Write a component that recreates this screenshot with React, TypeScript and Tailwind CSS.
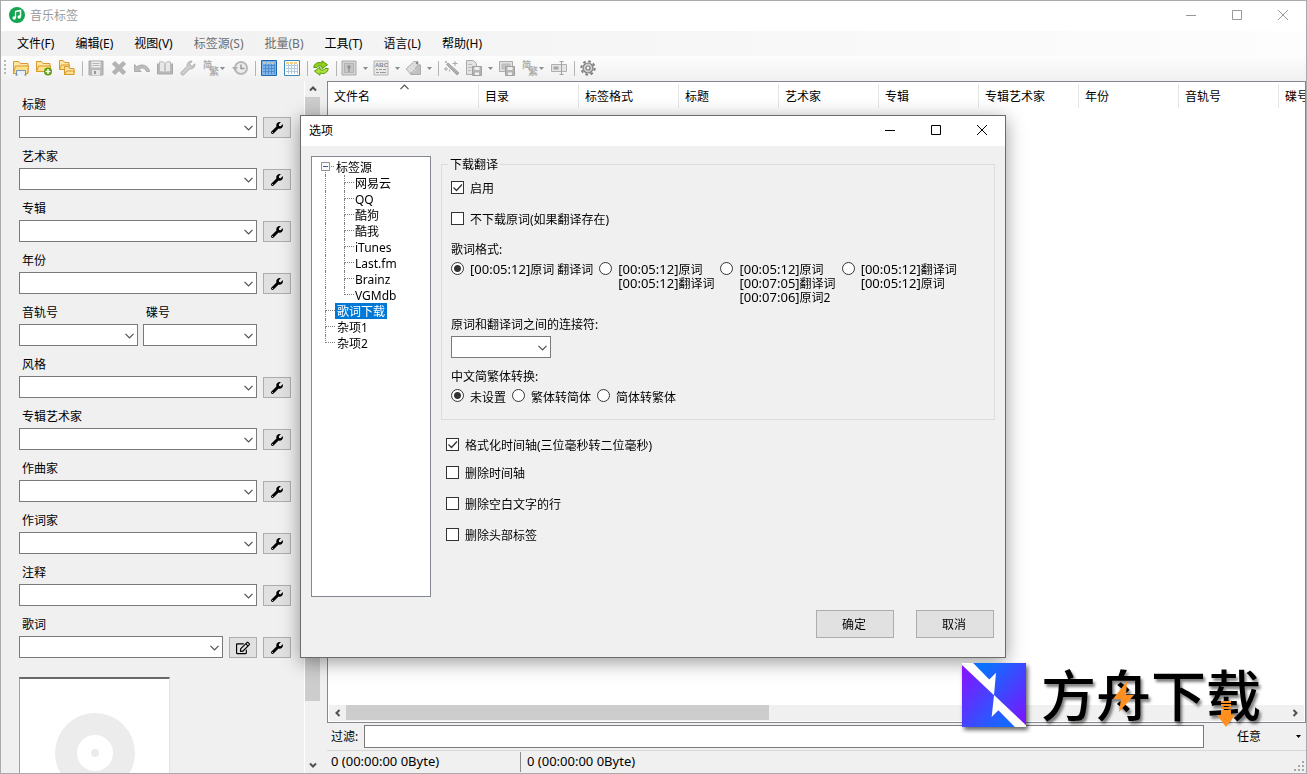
import type { ReactNode } from 'react'
import clsx from 'clsx'
import { FaRegEdit, FaWrench } from 'react-icons/fa'

const menus = [
  { name: '文件(F)' },
  { name: '编辑(E)' },
  { name: '视图(V)' },
  { name: '标签源(S)', disabled: true },
  { name: '批量(B)', disabled: true },
  { name: '工具(T)' },
  { name: '语言(L)' },
  { name: '帮助(H)' },
]

const columns = [
  '目录',
  '标签格式',
  '标题',
  '艺术家',
  '专辑',
  '专辑艺术家',
  '年份',
  '音轨号',
  '碟号',
]

const sources = ['网易云', 'QQ', '酷狗', '酷我', 'iTunes', 'Last.fm', 'Brainz', 'VGMdb']

function Svg({ children }: { children: ReactNode }) {
  return (
    <svg className="w-4 h-4 shrink-0" viewBox="0 0 16 16" fill="none" aria-hidden="true">
      {children}
    </svg>
  )
}

function Chevron({ className }: { className?: string }) {
  return (
    <svg
      className={clsx('w-[9px] h-[6px]', className)}
      viewBox="0 0 9 6"
      fill="none"
      stroke="currentColor"
      strokeWidth="1.2"
      aria-hidden="true"
    >
      <path d="M0.5 0.9l4 4 4-4" />
    </svg>
  )
}

function ScrollArrow({ className }: { className?: string }) {
  return (
    <svg
      className={clsx('w-2 h-2 text-[#505050]', className)}
      viewBox="0 0 8 8"
      fill="none"
      stroke="currentColor"
      strokeWidth="2"
      aria-hidden="true"
    >
      <path d="M1 2.5l3 3 3-3" />
    </svg>
  )
}

/* Toolbar icons */

function FolderShape({ x, y, w, h }: { x: number; y: number; w: number; h: number }) {
  return (
    <g transform={`translate(${x} ${y})`}>
      <path d={`M.5 ${h - 0.5}V.5h${w / 3}l1.5 2h${w - w / 3 - 3}V${h - 0.5}z`} fill="#fde6a3" stroke="#d9992f" />
      <path d={`M.5 ${h - 0.5}L2.5 5h${w - 3}l-1 ${h - 5.5}z`} fill="#ffe08a" stroke="#d9992f" />
    </g>
  )
}

function OpenFolderIcon() {
  return (
    <Svg>
      <FolderShape x={0} y={1} w={16} h={13} />
      <path d="M3.5 15v-4.5h9V15" fill="#e8f1fb" stroke="#7a93b5" />
      <path d="M2.5 15h2M11.5 15h2" stroke="#5f7796" />
    </Svg>
  )
}

function AddFolderIcon() {
  return (
    <Svg>
      <FolderShape x={0} y={1} w={15} h={11} />
      <circle cx="12" cy="11.5" r="4" fill="#5d9e0c" />
      <path d="M12 9v5M9.5 11.5h5" stroke="#fff" strokeWidth="1.5" />
    </Svg>
  )
}

function FoldersIcon() {
  return (
    <Svg>
      <FolderShape x={0} y={0} w={11} h={10} />
      <FolderShape x={5} y={6} w={11} h={9} />
    </Svg>
  )
}

function SaveIcon() {
  return (
    <Svg>
      <path d="M1 1h14v14H1z" fill="#b9b9b9" stroke="#a8a8a8" />
      <path d="M3.5 1.5h9v6h-9z" fill="#eee" />
      <path d="M4.5 3.5h7M4.5 5.5h7" stroke="#b5b5b5" />
      <path d="M4 10h8v5H4z" fill="#e4e4e4" />
      <path d="M6 11h2v3H6z" fill="#999" />
    </Svg>
  )
}

function DeleteIcon() {
  return (
    <Svg>
      <path
        d="M4 1.5l4 4 4-4 2.5 2.5-4 4 4 4-2.5 2.5-4-4-4 4L1.5 12l4-4-4-4z"
        fill="#b4b4b4"
        stroke="#a8a8a8"
      />
    </Svg>
  )
}

function UndoIcon() {
  return (
    <Svg>
      <path d="M.5 4.5v7H7L5 9.300c3-2.300 6-1.600 7.500 2.200h3C14.5 5.500 8 3 2.800 6.800z" fill="#bdbdbd" stroke="#ababab" />
    </Svg>
  )
}

function BookIcon() {
  return (
    <Svg>
      <path d="M.5 3.5V14h15V3.500" fill="#b8b8b8" stroke="#a8a8a8" />
      <path d="M2.5 2C5 1.200 7 2 8 3.500V13c-1-1.200-3-1.500-5.500-1zM13.500 2C11 1.200 9 2 8 3.500V13c1-1.200 3-1.500 5.500-1z" fill="#e8e8e8" stroke="#b8b8b8" />
    </Svg>
  )
}

function WrenchIcon() {
  return (
    <Svg>
      <path
        d="M1.300 12.200l6-6C6.500 3.500 9 .8 12 1.300L9.800 3.700l.5 2 2 .5 2.400-2.300c.5 3.100-2.200 5.500-4.900 4.800l-6 6c-1.600 1.200-3.700-.9-2.500-2.500z"
        fill="#cfcfcf"
        stroke="#a8a8a8"
      />
    </Svg>
  )
}

function ConvertIcon() {
  return (
    <svg
      className="w-4 h-4 shrink-0 overflow-visible font-['Noto_Sans_CJK_SC',sans-serif] font-bold"
      viewBox="0 0 16 16"
      fill="#adadad"
      aria-hidden="true"
    >
      <text x="0" y="8" fontSize="9">简</text>
      <text x="6" y="15" fontSize="10">繁</text>
    </svg>
  )
}

function HistoryIcon() {
  return (
    <Svg>
      <circle cx="9" cy="8" r="6" fill="#ececec" stroke="#b8b8b8" strokeWidth="2" />
      <path d="M9 4.500V8.500h3.500" stroke="#999" strokeWidth="1.5" />
      <path d="M0 7h6l-3 4z" fill="#b0b0b0" />
    </Svg>
  )
}

function GridIcon({ active }: { active?: boolean }) {
  return (
    <Svg>
      <path d="M.5.5h15v15H.5z" fill={active ? '#7fb4ea' : '#fff'} stroke={active ? '#1f66b0' : '#3d87b8'} />
      <path d="M2 3h12" stroke={active ? '#dfc98f' : '#efc45c'} strokeWidth="1.5" strokeDasharray="3 1" />
      <path
        d="M2 5.500h12M2 8.500h12M2 11.500h12M4.500 4v10M7.500 4v10M10.500 4v10M13.500 4v10"
        stroke={active ? '#4f8ccb' : '#b3cbe0'}
      />
    </Svg>
  )
}

function RefreshIcon() {
  return (
    <Svg>
      <path d="M.8 7.500C1 3.500 5 1.500 9 3V.8l5.500 4L9 8.800V6.500C6.500 5.300 4.500 6 4 7.500z" fill="#93cf1f" stroke="#5a9a0c" />
      <path d="M15.200 8.500c-.2 4-4.200 6-8.200 4.500v2.200l-5.500-4L7 7.200v2.300c2.500 1.200 4.500.5 5-1z" fill="#aee03b" stroke="#5a9a0c" />
    </Svg>
  )
}

function PictureIcon() {
  return (
    <Svg>
      <path d="M1 1h14v14H1z" fill="#d4d4d4" stroke="#ababab" />
      <path d="M3.500 3.500h9v9h-9z" fill="#c6c6c6" stroke="#b3b3b3" />
      <path d="M8 5a2 2 0 0 1 .7 3.800V12H7.300V8.800A2 2 0 0 1 8 5z" fill="#949494" />
    </Svg>
  )
}

function AbcIcon() {
  return (
    <svg
      className="w-4 h-4 shrink-0 font-['Liberation_Sans',sans-serif] font-bold"
      viewBox="0 0 16 16"
      fill="none"
      aria-hidden="true"
    >
      <path d="M1 1h14v14H1z" fill="#e9e9e9" stroke="#b3b3b3" />
      <text x="2" y="7" fontSize="6" fill="#8a8a8a">ABC</text>
      <path d="M3 9.500h2m1 0h3m1 0h3M3 12.500h3m1 0h6" stroke="#999" />
    </svg>
  )
}

function TagIcon() {
  return (
    <Svg>
      <path d="M1 9l8-7.500h4V6l-7 8.500z" fill="#dcdcdc" stroke="#b3b3b3" />
      <path d="M5 14l9-9.500 1.500.5v9.500H7z" fill="#c0c0c0" stroke="#ababab" />
      <circle cx="12" cy="3" r="1.200" fill="#888" />
      <path d="M4.500 8.500l4 3.500M6.500 7l4 3.500" stroke="#e8e8e8" />
    </Svg>
  )
}

function WandIcon() {
  return (
    <Svg>
      <path d="M4 3l11 10-2 2L2.500 4.500z" fill="#b0b0b0" stroke="#a0a0a0" />
      <path d="M2 7v4M0 9h4M11 1v5M8.500 3.500h5M2 1v2M1 2h2M5.500 9.500v2" stroke="#a8a8a8" />
    </Svg>
  )
}

function DocSaveIcon({ wide }: { wide?: boolean }) {
  return (
    <Svg>
      <path d={wide ? 'M.5 1.5h13v10H.5z' : 'M.5.5h7l3 3v11H.5z'} fill="#e2e2e2" stroke="#ababab" />
      <path d={wide ? 'M3 4h8v5H3z' : 'M2 4.500h4M2 7.500h4M2 10.500h3'} fill="#c4c4c4" stroke="#bbb" />
      <path d="M6.500 6.500h9v9h-9z" fill="#b4b4b4" stroke="#a0a0a0" />
      <path d="M8.500 7h5v3h-5zM9 12.500h4V15H9z" fill="#efefef" />
    </Svg>
  )
}

function RenameIcon() {
  return (
    <Svg>
      <path d="M.5 4.500h15v7H.5z" fill="#e4e4e4" stroke="#b0b0b0" />
      <path d="M2.500 6.500h5v3h-5z" fill="#a5a5a5" />
      <path d="M10.500 2v12M8.500 1.500h4M8.500 14.500h4" stroke="#a0a0a0" />
    </Svg>
  )
}

function GearIcon() {
  return (
    <Svg>
      <circle cx="8" cy="8" r="6.700" stroke="#7d7d7d" strokeWidth="2" strokeDasharray="2.630 2.630" />
      <circle cx="8" cy="8" r="5" fill="#d0d0d0" stroke="#7d7d7d" strokeWidth="1.200" />
      <circle cx="8" cy="8" r="2" fill="#f8f8f8" stroke="#7d7d7d" strokeWidth="1.200" />
    </Svg>
  )
}

function Caret() {
  return (
    <svg className="w-[5px] h-[3px] shrink-0" viewBox="0 0 5 3" fill="#8c8c8c" aria-hidden="true">
      <path d="M0 0h5L2.500 3z" />
    </svg>
  )
}

function ToolButton({ label, children }: { label: string; children: ReactNode }) {
  return (
    <button type="button" aria-label={label} className="flex items-center w-[23px] h-6 pl-[3px]">
      {children}
    </button>
  )
}

function SplitButton({ label, children }: { label: string; children: ReactNode }) {
  return (
    <button type="button" aria-label={label} className="flex items-center gap-[6px] w-8 h-6 pl-0.5">
      {children}
      <Caret />
    </button>
  )
}

function MenuButton({ label, children }: { label: string; children: ReactNode }) {
  return (
    <button type="button" aria-label={label} className="flex items-center gap-px w-[29px] h-6 pl-[3px]">
      {children}
      <Caret />
    </button>
  )
}

function Separator() {
  return (
    <span className="flex items-center justify-center w-[6px] h-6">
      <span className="w-px h-[15px] bg-[#b4b4b4]" />
    </span>
  )
}

function Toolbar() {
  return (
    <div className="flex items-start h-[25px] shrink-0 bg-linear-to-b from-[#fdfdfd] to-[#f0f0f0]">
      <svg className="w-[9px] h-6 shrink-0" viewBox="0 0 9 24" fill="#b8b8b8" aria-hidden="true">
        <path d="M3 4h2v2H3zM3 8h2v2H3zM3 12h2v2H3zM3 16h2v2H3z" />
      </svg>
      <ToolButton label="打开文件夹"><OpenFolderIcon /></ToolButton>
      <ToolButton label="添加文件夹"><AddFolderIcon /></ToolButton>
      <ToolButton label="最近文件夹"><FoldersIcon /></ToolButton>
      <Separator />
      <ToolButton label="保存"><SaveIcon /></ToolButton>
      <ToolButton label="删除"><DeleteIcon /></ToolButton>
      <ToolButton label="撤销"><UndoIcon /></ToolButton>
      <ToolButton label="读取"><BookIcon /></ToolButton>
      <ToolButton label="修复"><WrenchIcon /></ToolButton>
      <MenuButton label="简繁转换"><ConvertIcon /></MenuButton>
      <ToolButton label="历史"><HistoryIcon /></ToolButton>
      <Separator />
      <ToolButton label="列表"><GridIcon active /></ToolButton>
      <ToolButton label="表格"><GridIcon /></ToolButton>
      <Separator />
      <ToolButton label="刷新"><RefreshIcon /></ToolButton>
      <Separator />
      <SplitButton label="封面"><PictureIcon /></SplitButton>
      <SplitButton label="歌词"><AbcIcon /></SplitButton>
      <SplitButton label="标签"><TagIcon /></SplitButton>
      <Separator />
      <ToolButton label="自动匹配"><WandIcon /></ToolButton>
      <SplitButton label="导出"><DocSaveIcon /></SplitButton>
      <ToolButton label="导出封面"><DocSaveIcon wide /></ToolButton>
      <MenuButton label="批量简繁转换"><ConvertIcon /></MenuButton>
      <ToolButton label="重命名"><RenameIcon /></ToolButton>
      <Separator />
      <ToolButton label="设置"><GearIcon /></ToolButton>
    </div>
  )
}

function WindowButtons() {
  return (
    <div className="flex ml-auto">
      <button type="button" aria-label="最小化" className="flex items-center justify-center w-[46px] h-[29px]">
        <svg className="w-[10px] h-[11px]" viewBox="0 0 10 11" stroke="currentColor" fill="none">
          <path d="M0 5.500h10" />
        </svg>
      </button>
      <button type="button" aria-label="最大化" className="flex items-center justify-center w-[46px] h-[29px]">
        <svg className="w-[10px] h-[11px]" viewBox="0 0 10 11" stroke="currentColor" fill="none">
          <path d="M.5.5h9v9h-9z" />
        </svg>
      </button>
      <button type="button" aria-label="关闭" className="flex items-center justify-center w-[46px] h-[29px]">
        <svg className="w-[10px] h-[11px]" viewBox="0 0 10 11" stroke="currentColor" fill="none">
          <path d="M0 0l10 10M10 0L0 10" />
        </svg>
      </button>
    </div>
  )
}

function Combo({ id, className }: { id: string; className?: string }) {
  return (
    <span className={clsx('grid items-center', className)}>
      <select
        id={id}
        className="w-full h-[22px] col-start-1 row-start-1 bg-white border border-[#7a7a7a] appearance-none outline-none"
      />
      <Chevron className="col-start-1 row-start-1 justify-self-end mr-1 mt-0.5 pointer-events-none text-[#505050]" />
    </span>
  )
}

function IconButton({ label, children }: { label: string; children: ReactNode }) {
  return (
    <button
      type="button"
      aria-label={label}
      className="flex items-center justify-center w-7 h-[21px] shrink-0 self-end bg-[#e1e1e1] border border-[#adadad] text-black"
    >
      {children}
    </button>
  )
}

function Field({ id, label, editable }: { id: string; label: string; editable?: boolean }) {
  return (
    <div className="flex flex-col gap-[3px]">
      <label htmlFor={id} className="pl-[3px] leading-4">
        {label}
      </label>
      <div className="flex gap-[6px]">
        <Combo id={id} className="flex-1" />
        {editable && (
          <IconButton label={`编辑${label}`}>
            <FaRegEdit className="w-[14px] h-[14px]" />
          </IconButton>
        )}
        <IconButton label={`${label}工具`}>
          <FaWrench className="w-3 h-3" />
        </IconButton>
      </div>
    </div>
  )
}

function Sidebar() {
  return (
    <aside className="flex w-[319px] shrink-0 overflow-hidden">
      <div className="flex-1 pl-[18px] pr-[13px] pt-4">
        <div className="flex flex-col gap-[11px]">
          <Field id="title" label="标题" />
          <Field id="artist" label="艺术家" />
          <Field id="album" label="专辑" />
          <Field id="year" label="年份" />
          <div className="flex gap-[5px] pr-[34px]">
            <div className="flex flex-col w-[119px] gap-[3px]">
              <label htmlFor="track" className="pl-[3px] leading-4">音轨号</label>
              <Combo id="track" />
            </div>
            <div className="flex flex-col flex-1 gap-[3px]">
              <label htmlFor="disc" className="pl-[3px] leading-4">碟号</label>
              <Combo id="disc" />
            </div>
          </div>
          <Field id="genre" label="风格" />
          <Field id="album-artist" label="专辑艺术家" />
          <Field id="composer" label="作曲家" />
          <Field id="lyricist" label="作词家" />
          <Field id="comment" label="注释" />
          <Field id="lyrics" label="歌词" editable />
        </div>
        <div className="flex items-center justify-center w-[151px] h-[151px] mt-[19px] bg-white border border-t-2 border-[#a0a0a0] border-t-[#696969] border-r-[#e3e3e3]">
          <svg className="w-20 h-20" viewBox="0 0 80 80" aria-hidden="true">
            <circle cx="40" cy="40" r="40" fill="#ececec" />
            <circle cx="40" cy="40" r="18" fill="#fff" />
            <circle cx="40" cy="40" r="4" fill="#ececec" />
          </svg>
        </div>
      </div>
      <div className="flex flex-col items-center w-4 border-l border-white">
        <div className="flex items-center h-4 shrink-0">
          <ScrollArrow className="rotate-180" />
        </div>
        <div className="flex-1 w-full">
          <div className="w-full h-11/12 bg-[#cdcdcd]" />
        </div>
        <div className="flex items-center h-[17px] shrink-0">
          <ScrollArrow />
        </div>
      </div>
    </aside>
  )
}

function FileList() {
  return (
    <div className="flex flex-col flex-1 min-h-0 overflow-hidden bg-white border border-[#828790]">
      <div className="flex-1 overflow-hidden">
        <table className="w-[1051px] table-fixed">
          <thead>
            <tr className="h-[26px]">
              <th className="w-[151px] p-0 font-normal text-left">
                <div className="grid items-center h-6 mt-px pl-[6px] border-r border-[#e5e5e5]">
                  <span className="col-start-1 row-start-1 pt-0.5">文件名</span>
                  <Chevron className="col-start-1 row-start-1 self-start justify-self-center mr-1 rotate-180 text-[#505050]" />
                </div>
              </th>
              {columns.map((name) => (
                <th key={name} className="p-0 font-normal text-left">
                  <div className="flex items-center h-6 mt-px pt-0.5 pl-[6px] border-r border-[#e5e5e5]">{name}</div>
                </th>
              ))}
            </tr>
          </thead>
          <tbody />
        </table>
      </div>
      <div className="flex items-center h-4 mb-px mx-px bg-[#f0f0f0]">
        <div className="flex justify-center w-[17px] shrink-0">
          <ScrollArrow className="rotate-90" />
        </div>
        <div className="flex-1 h-full">
          <div className="w-[45%] h-[15px] bg-[#cdcdcd]" />
        </div>
        <div className="flex justify-center w-[19px] shrink-0">
          <ScrollArrow className="-rotate-90" />
        </div>
      </div>
    </div>
  )
}

function FilterBar() {
  return (
    <div className="flex items-center h-7 border-b border-[#d7d7d7] shrink-0">
      <label htmlFor="filter" className="w-[37px] pl-1 shrink-0">
        过滤:
      </label>
      <input
        id="filter"
        type="text"
        className="flex-1 min-w-0 h-[23px] px-1 bg-white border border-[#7a7a7a] outline-none"
      />
      <div className="grid items-center w-[102px]">
        <select
          aria-label="过滤字段"
          className="w-full h-6 pt-px pl-[33px] col-start-1 row-start-1 appearance-none outline-none"
        >
          <option>任意</option>
        </select>
        <svg
          className="w-[5px] h-[3px] mr-[5px] col-start-1 row-start-1 justify-self-end pointer-events-none"
          viewBox="0 0 5 3"
          aria-hidden="true"
        >
          <path d="M0 0h5L2.500 3z" />
        </svg>
      </div>
    </div>
  )
}

function StatusBar() {
  return (
    <div className="flex items-center h-[22px] shrink-0 text-[13px]">
      <span className="flex items-center w-[194px] h-5 pl-1 border-r border-[#8c8c8c]">0 (00:00:00 0Byte)</span>
      <span className="pl-[6px]">0 (00:00:00 0Byte)</span>
      <svg className="w-[11px] h-[11px] ml-auto mr-px mt-2" viewBox="0 0 11 11" fill="#a8a8a8" aria-hidden="true">
        <path d="M8 0h2v2H8zM4 4h2v2H4zM8 4h2v2H8zM0 8h2v2H0zM4 8h2v2H4zM8 8h2v2H8z" />
      </svg>
    </div>
  )
}

/* Options dialog */

function Guide({ stub, last }: { stub?: boolean; last?: boolean }) {
  return (
    <span className="flex flex-col w-[10px] shrink-0">
      <span className={clsx('h-2 border-l border-dotted border-[#808080]', stub && 'border-b')} />
      {!last && <span className="h-2 border-l border-dotted border-[#808080]" />}
    </span>
  )
}

function SourceTree() {
  return (
    <ul className="w-[120px] min-h-[441px] pt-0.5 bg-white border border-[#828790] shrink-0 leading-[17px]">
      <li>
        <div className="flex h-4 pl-[9px]">
          <svg className="w-[14px] h-4" viewBox="0 0 14 16" fill="none" aria-hidden="true">
            <path d="M.5 3.500h8v8h-8z" fill="#fafafa" stroke="#919191" />
            <path d="M2 7.500h5" stroke="#3c5bab" />
            <path d="M10 7.500h4M4.500 13v3" stroke="#808080" strokeDasharray="1 1" />
          </svg>
          <span className="px-px">标签源</span>
        </div>
        <ul>
          {sources.map((name, i) => (
            <li key={name} className="flex h-4 pl-[13px]">
              <span className="w-[19px] border-l border-dotted border-[#808080]" />
              <Guide stub last={i === sources.length - 1} />
              <span className="pl-px">{name}</span>
            </li>
          ))}
        </ul>
      </li>
      <li className="flex h-4 pl-[13px]">
        <Guide stub />
        <span className="px-0.5 text-white bg-[#0078d7]">歌词下载</span>
      </li>
      <li className="flex h-4 pl-[13px]">
        <Guide stub />
        <span className="px-0.5">杂项1</span>
      </li>
      <li className="flex h-4 pl-[13px]">
        <Guide stub last />
        <span className="px-0.5">杂项2</span>
      </li>
    </ul>
  )
}

function Checkbox({ label, checked, className }: { label: string; checked?: boolean; className?: string }) {
  return (
    <label className={clsx('flex items-start gap-[6px] h-4', className)}>
      <span className="grid mt-px">
        <input
          type="checkbox"
          defaultChecked={checked}
          className="w-[13px] h-[13px] col-start-1 row-start-1 bg-white border border-[#333] appearance-none peer"
        />
        <svg
          className="hidden w-[13px] h-[13px] col-start-1 row-start-1 pointer-events-none peer-checked:block"
          viewBox="0 0 13 13"
          fill="none"
          stroke="#333"
          aria-hidden="true"
        >
          <path d="M2.500 6.500l3 3 5.500-6" strokeWidth="1.300" />
        </svg>
      </span>
      <span className="leading-[18px]">{label}</span>
    </label>
  )
}

function Radio({ name, checked, children }: { name: string; checked?: boolean; children: ReactNode }) {
  return (
    <label className="flex items-start gap-[6px]">
      <input
        type="radio"
        name={name}
        defaultChecked={checked}
        className="w-[13px] h-[13px] shrink-0 bg-white border border-[#333] rounded-full appearance-none checked:bg-[radial-gradient(circle,#333_3px,#fff_4px)]"
      />
      <span>{children}</span>
    </label>
  )
}

function Line({ time, children }: { time: string; children: ReactNode }) {
  return (
    <span className="block h-[14px] leading-[14px] whitespace-nowrap">
      <span className="text-[13px]">[{time}]</span>
      {children}
    </span>
  )
}

function OptionsDialog() {
  return (
    <div className="fixed inset-0 flex items-center justify-center pb-px pr-px">
      <div
        role="dialog"
        aria-labelledby="options-title"
        className="w-[706px] bg-[#f0f0f0] border border-[#6b6b6b] shadow-[0_4px_18px_rgba(0,0,0,0.4)]"
      >
        <div className="flex items-start h-[30px] pl-2 bg-white">
          <h2 id="options-title" className="leading-[30px]">选项</h2>
          <WindowButtons />
        </div>
        <div className="flex gap-2.5 px-2.5 pt-2.5">
          <SourceTree />
          <div className="flex-1 min-w-0">
            <fieldset className="pl-[9px] pb-[13px] border border-[#dcdcdc]">
              <legend className="px-0.5 -ml-[3px] h-4 leading-[18px]">下载翻译</legend>
              <Checkbox label="启用" checked className="mt-2" />
              <Checkbox label="不下载原词(如果翻译存在)" className="mt-[15px]" />
              <p className="mt-[15px] leading-4">歌词格式:</p>
              <div className="flex gap-[6px] mt-1">
                <Radio name="format" checked>
                  <Line time="00:05:12">原词 翻译词</Line>
                </Radio>
                <Radio name="format">
                  <Line time="00:05:12">原词</Line>
                  <Line time="00:05:12">翻译词</Line>
                </Radio>
                <Radio name="format">
                  <Line time="00:05:12">原词</Line>
                  <Line time="00:07:05">翻译词</Line>
                  <Line time="00:07:06">原词2</Line>
                </Radio>
                <Radio name="format">
                  <Line time="00:05:12">翻译词</Line>
                  <Line time="00:05:12">原词</Line>
                </Radio>
              </div>
              <label htmlFor="joiner" className="block mt-[13px] leading-4">
                原词和翻译词之间的连接符:
              </label>
              <Combo id="joiner" className="w-[100px] mt-[3px]" />
              <p className="mt-[11px] leading-4">中文简繁体转换:</p>
              <div className="flex gap-[6px] mt-1 leading-[17px]">
                <Radio name="chinese" checked>未设置</Radio>
                <Radio name="chinese">繁体转简体</Radio>
                <Radio name="chinese">简体转繁体</Radio>
              </div>
            </fieldset>
            <div className="pl-[5px] mt-[17px]">
              <Checkbox label="格式化时间轴(三位毫秒转二位毫秒)" checked />
              <Checkbox label="删除时间轴" className="mt-3" />
              <Checkbox label="删除空白文字的行" className="mt-[15px]" />
              <Checkbox label="删除头部标签" className="mt-[15px]" />
            </div>
          </div>
        </div>
        <div className="flex justify-end gap-[22px] pt-[13px] pb-[19px] pr-[11px]">
          <button type="button" className="w-[78px] h-7 pt-0.5 pr-0.5 bg-[#e1e1e1] border border-[#adadad]">确定</button>
          <button type="button" className="w-[78px] h-7 pt-0.5 pr-0.5 bg-[#e1e1e1] border border-[#adadad]">取消</button>
        </div>
      </div>
    </div>
  )
}

function Brand() {
  return (
    <div className="fixed right-[46px] bottom-[47px] flex items-center gap-[15px] pointer-events-none">
      <svg
        className="w-16 h-16 drop-shadow-[2px_3px_2px_rgba(0,0,0,0.6)]"
        viewBox="0 0 190 190"
        aria-hidden="true"
      >
        <defs>
          <linearGradient id="brand-left" x1="0" y1="0" x2="1" y2="1">
            <stop offset="0" stopColor="#8a10ff" />
            <stop offset="0.85" stopColor="#1766ff" />
          </linearGradient>
          <linearGradient id="brand-right" x1="0" y1="0" x2="1" y2="1">
            <stop offset="0.15" stopColor="#0c70ff" />
            <stop offset="1" stopColor="#8010ff" />
          </linearGradient>
        </defs>
        <path d="M0 0h190v190H0z" fill="#fff" />
        <path d="M0 6l95 90-7 64 20-20 49 50H0z" fill="url(#brand-left)" />
        <path d="M33 0l48 49 20-20-6 66 95 90V0z" fill="url(#brand-right)" />
      </svg>
      <div className="relative">
        <p className="text-[55px] leading-[64px] font-medium text-black whitespace-nowrap [text-shadow:2px_3px_3px_rgba(0,0,0,0.5)]">
          方舟下载
        </p>
        <svg className="absolute inset-0 w-full h-full" viewBox="0 0 220 64" fill="#ff9020" aria-hidden="true">
          <path d="M86 18L72 36h8l-2 13 15-17h-8z" />
          <path d="M180 38h10v2h-10zM180 41h10v2h-10zM180 44h10v2h-10zM180 47h10v5h4l-9 12-9-12h4z" />
        </svg>
      </div>
    </div>
  )
}

export default function App() {
  return (
    <div className="flex flex-col h-screen overflow-hidden bg-[#f0f0f0] border border-[#aaa] text-xs text-black font-['Noto_Sans','Noto_Sans_CJK_SC',sans-serif]">
      <header className="flex items-start h-[30px] pl-2 shrink-0 bg-white text-[#999]">
        <svg className="w-4 h-4 mt-[6px] mr-[5px]" viewBox="0 0 16 16" aria-hidden="true">
          <circle cx="8" cy="8" r="8" fill="#12a650" />
          <path d="M6.500 4.500l5-1v6" fill="none" stroke="#fff" strokeWidth="1.500" />
          <path d="M6.500 4v7" stroke="#fff" strokeWidth="1.300" />
          <circle cx="5.200" cy="11" r="1.700" fill="#fff" />
          <circle cx="10.200" cy="10" r="1.700" fill="#fff" />
        </svg>
        <h1 className="leading-[30px]">音乐标签</h1>
        <WindowButtons />
      </header>
      <nav className="flex items-center gap-px h-[25px] pl-[6px] shrink-0 bg-linear-to-r from-[#f0f0f0] to-[#fdfdfd]">
        {menus.map((menu) => (
          <button
            key={menu.name}
            type="button"
            disabled={menu.disabled}
            className="px-2.5 disabled:text-[#6d6d6d]"
          >
            {menu.name}
          </button>
        ))}
      </nav>
      <Toolbar />
      <main className="flex flex-1 min-h-0 gap-[7px]">
        <Sidebar />
        <div className="flex flex-col flex-1 min-w-0">
          <FileList />
          <FilterBar />
          <StatusBar />
        </div>
      </main>
      <OptionsDialog />
      <Brand />
    </div>
  )
}
